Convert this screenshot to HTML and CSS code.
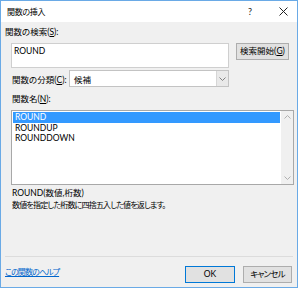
FILE: index.html
```html
<!DOCTYPE html>
<html lang="ja">
<head>
    <meta charset="UTF-8">
    <title>関数の挿入</title>
    <link rel="stylesheet" href="styles.css">
</head>
<body>
    <div class="dialog">
        <div class="titlebar">
            <span class="title">関数の挿入</span>
            <span class="help">?</span>
            <span class="close">
                <svg width="9" height="9" viewBox="0 0 9 9"><path d="M0.5 0.5 L8.5 8.5 M8.5 0.5 L0.5 8.5" stroke="#222" stroke-width="1" fill="none"/></svg>
            </span>
        </div>

        <div class="content">
            <div class="label">関数の検索(<u>S</u>):</div>
            <div class="search-row">
                <div class="textbox">ROUND</div>
                <button class="btn btn-go">検索開始(<u>G</u>)</button>
            </div>

            <div class="category-row">
                <span class="category-label">関数の分類(<u>C</u>):</span>
                <div class="combo">
                    <span class="combo-value">候補</span>
                    <span class="combo-arrow">
                        <svg width="7" height="4" viewBox="0 0 7 4"><polyline points="0.5,0.5 3.5,3.5 6.5,0.5" stroke="#808080" fill="none"/></svg>
                    </span>
                </div>
            </div>

            <div class="label indent name-label">関数名(<u>N</u>):</div>
            <div class="listbox">
                <ul class="items">
                    <li class="selected">ROUND</li>
                    <li>ROUNDUP</li>
                    <li>ROUNDDOWN</li>
                </ul>
                <div class="scrollbar">
                    <span class="scroll-btn">
                        <svg width="7" height="4" viewBox="0 0 7 4"><polyline points="0.5,3.5 3.5,0.5 6.5,3.5" stroke="#b0b0b0" fill="none"/></svg>
                    </span>
                    <span class="scroll-btn">
                        <svg width="7" height="4" viewBox="0 0 7 4"><polyline points="0.5,0.5 3.5,3.5 6.5,0.5" stroke="#b0b0b0" fill="none"/></svg>
                    </span>
                </div>
            </div>

            <div class="label indent syntax">ROUND(数値,桁数)</div>
            <div class="label indent desc">数値を指定した桁数に四捨五入した値を返します。</div>
        </div>

        <div class="separator"></div>
        <div class="footer">
            <a class="help-link" href="#">この関数のヘルプ</a>
            <button class="btn btn-ok">OK</button>
            <button class="btn btn-cancel">キャンセル</button>
        </div>
    </div>
</body>
</html>
```

FILE: styles.css
```css
/* General */
body {
    margin: 0;
    background-color: #fff;
    font-family: Lato, "Noto Sans CJK JP", sans-serif;
    font-size: 8.5px;
    font-feature-settings: "palt";
    color: #000;
}

.dialog {
    width: 298px;
    height: 288px;
    box-sizing: border-box;
    border: 1px solid #6aaae6;
    background-color: #f0f0f0;
    display: flex;
    flex-direction: column;
}

/* Title bar */
.titlebar {
    height: 21px;
    flex-shrink: 0;
    background-color: #fff;
    display: flex;
    align-items: center;
}

.title {
    padding-left: 6px;
    font-size: 8px;
    letter-spacing: -0.3px;
}

.help {
    margin-left: auto;
    margin-right: 13px;
    width: 12px;
    text-align: center;
    font-size: 9px;
    color: #222;
}

.close {
    width: 28px;
    display: flex;
    justify-content: center;
}

/* Content */
.content {
    padding: 4px 0 0 4px;
}

.label {
    line-height: 12px;
    white-space: nowrap;
}

.indent {
    padding-left: 7px;
}

.search-row {
    display: flex;
    align-items: flex-start;
    margin: 5px 0 0 6px;
}

.textbox {
    width: 218px;
    height: 25px;
    box-sizing: border-box;
    border: 1px solid #cfcfcf;
    background-color: #fff;
    padding: 1px 2px;
    line-height: 12px;
}

.btn {
    font: inherit;
    color: #000;
    background-color: #e1e1e1;
    border: 1px solid #adadad;
    padding: 0;
    height: 17px;
    line-height: 15px;
    box-sizing: border-box;
    white-space: nowrap;
}

.btn-go {
    width: 53px;
    margin-left: 7px;
}

.category-row {
    display: flex;
    align-items: center;
    height: 17px;
    margin: 2px 0 0 7px;
}

.category-label {
    width: 57px;
    flex-shrink: 0;
    white-space: nowrap;
}

.combo {
    width: 160px;
    height: 17px;
    box-sizing: border-box;
    border: 1px solid #c3c3c3;
    background-color: #fff;
    display: flex;
    align-items: center;
}

.combo-value {
    flex: 1;
    padding-left: 4px;
}

.combo-arrow {
    width: 11px;
    height: 15px;
    background-color: #e9e9e9;
    border-left: 1px solid #d6d6d6;
    display: flex;
    align-items: center;
    justify-content: center;
}

.name-label {
    margin-top: 6px;
}

/* List box */
.listbox {
    width: 283px;
    height: 75px;
    box-sizing: border-box;
    margin: 5px 0 0 6px;
    border: 1px solid #a8a8a8;
    background-color: #fff;
    display: flex;
}

.items {
    flex: 1;
    list-style: none;
    margin: 0;
    padding: 1px;
}

.items li {
    line-height: 10.5px;
    padding-left: 2px;
}

.items li.selected {
    background-color: #3399ff;
    color: #fff;
}

.scrollbar {
    width: 12px;
    background-color: #f0f0f0;
    display: flex;
    flex-direction: column;
    justify-content: space-between;
}

.scroll-btn {
    height: 12px;
    display: flex;
    align-items: center;
    justify-content: center;
}

.syntax {
    margin-top: 2px;
}

.desc {
    font-size: 8px;
    letter-spacing: -0.8px;
}

/* Footer */
.separator {
    margin: auto 4px 0;
    height: 1px;
    background-color: #dcdcdc;
}

.footer {
    height: 30px;
    box-sizing: border-box;
    padding: 9px 5px 0 4px;
    display: flex;
    align-items: flex-start;
}

.help-link {
    margin-right: auto;
    line-height: 12px;
    font-size: 8px;
    color: #0066cc;
    text-decoration: underline;
    letter-spacing: -0.9px;
}

.btn-ok {
    width: 50px;
    margin-right: 8px;
    border-color: #0078d7;
}

.btn-cancel {
    width: 49px;
    letter-spacing: -0.8px;
}
```
